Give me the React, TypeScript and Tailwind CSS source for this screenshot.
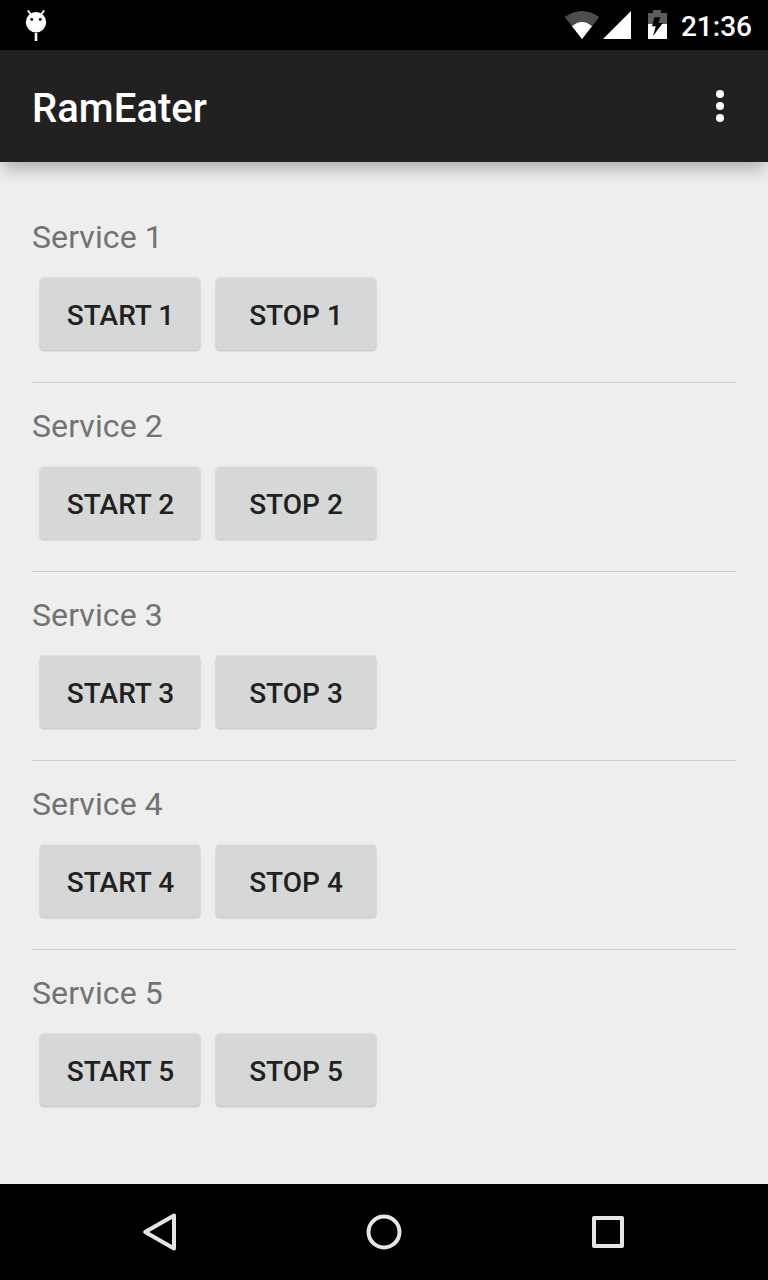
import React from "react";

function Row({ n }: { n: number }) {
  return (
    <section className="h-[189px]">
      <div className="flex h-[42px] items-center text-[32px] leading-[42px] tracking-[0.09px] text-[#727272]">Service {n}</div>
      <div className="mt-[20px] flex gap-[16px] pl-[8px]">
        {["START", "STOP"].map((t) => (
          <button key={t} className="h-[72px] w-[160px] rounded-[4px] bg-[#d6d7d7] pt-[4px] text-[28px] font-medium text-[#212121] shadow-[0_0_0_1px_rgba(214,215,215,0.5),0_1px_2px_rgba(0,0,0,0.25)] first:pl-[1px]">
            {t} {n}
          </button>
        ))}
      </div>
      {n < 5 && <div className="mt-[32px] h-px bg-[#cecece]" />}
    </section>
  );
}

export default function App() {
  return (
    <div className="flex h-[1280px] w-[768px] flex-col bg-[#eeeeee] font-['Roboto',sans-serif]">
      <header className="flex h-[50px] items-center bg-black pl-[24px] pr-[16px] text-white">
        <svg width="24" height="34" viewBox="24 8 24 34" fill="white">
          <circle cx="36" cy="22.2" r="10.2" />
          <path d="M34.7 33h2.6v8h-2.6z" />
          <path d="M28.3 11l3 4M43.7 11l-3 4" stroke="white" strokeWidth="2" strokeLinecap="round" />
          <circle cx="31.7" cy="19.4" r="1.4" fill="black" />
          <circle cx="40.3" cy="19.4" r="1.4" fill="black" />
        </svg>
        <svg className="ml-auto" width="108" height="40" viewBox="562 5 108 40">
          <path d="M564.7 17Q582 5 599.3 17L582 39Z" fill="#4d4d4d" />
          <path d="M572 26.2Q582 17.7 592 26.2L582 39Z" fill="white" />
          <path d="M603 39L631 11V39Z" fill="white" />
          <path d="M648 13h5v-3h8v3h6v11h-19z" fill="#5c5c5c" />
          <path d="M648 24h19v15h-19z" fill="white" />
          <path d="M654.5 17.3L652 26.3H655.8L653 36L662.8 23H658.2L660.5 17.3Z" fill="black" />
        </svg>
        <span className="ml-[11px] pt-[3px] text-[28px] font-medium">21:36</span>
      </header>
      <div className="flex h-[112px] items-center justify-between bg-[#212121] pl-[32px] pr-[44px] text-white shadow-[0_10px_16px_-3px_rgba(0,0,0,0.27)]">
        <h1 className="pt-[5px] text-[40px] font-medium tracking-[0.05px]">RamEater</h1>
        <svg width="8" height="32" viewBox="0 0 8 32" fill="white"><circle cx="4" cy="4" r="4" /><circle cx="4" cy="16" r="4" /><circle cx="4" cy="28" r="4" /></svg>
      </div>
      <main className="flex-1 px-[32px] pt-[54px]">{[1, 2, 3, 4, 5].map((n) => <Row key={n} n={n} />)}</main>
      <nav className="flex h-[96px] items-center bg-black px-[48px]">
        <svg width="672" height="96" viewBox="48 1184 672 96" fill="none" stroke="#e5e5e5" strokeWidth="4" strokeLinejoin="round"><path d="M174 1215.5v33l-28.8-16.5z" /><circle cx="384" cy="1232" r="15.5" /><rect x="594" y="1218" width="28" height="28" /></svg>
      </nav>
    </div>
  );
}
